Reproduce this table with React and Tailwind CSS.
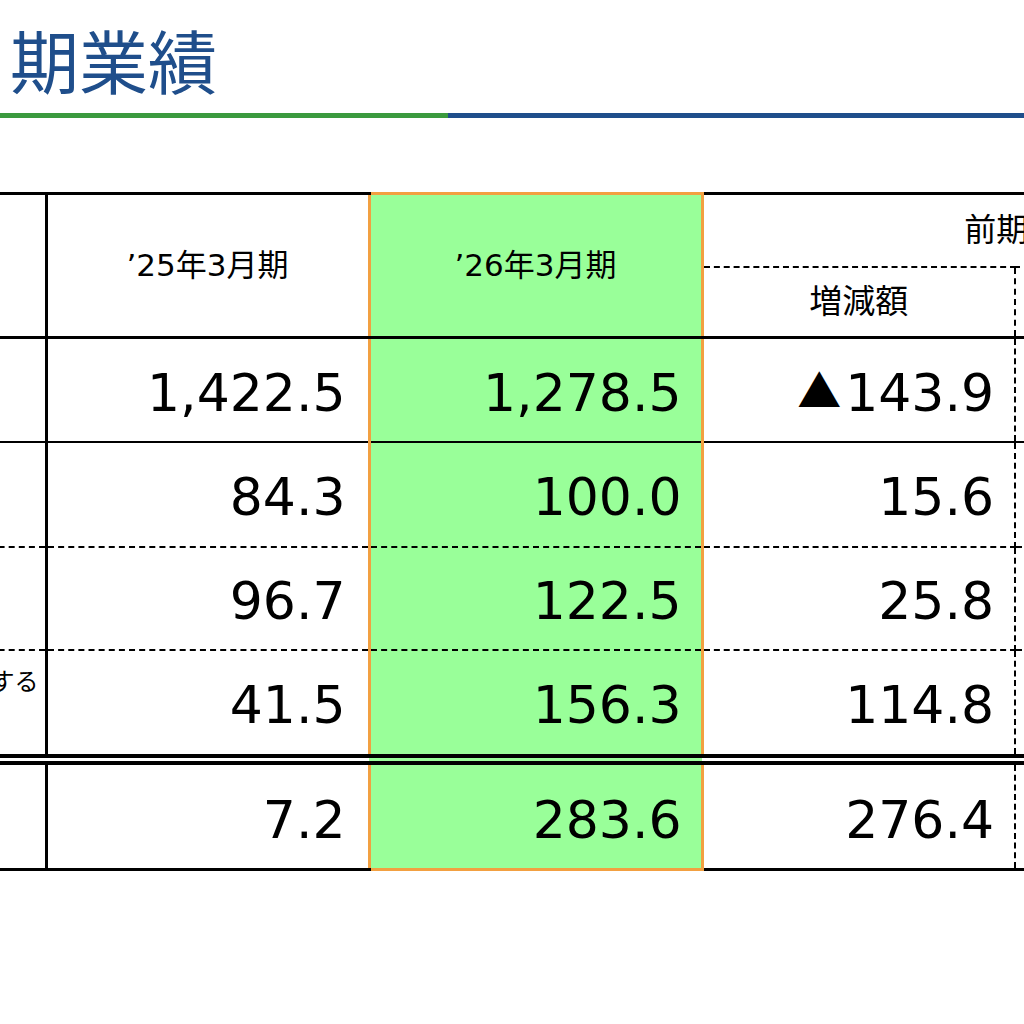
import React from 'react';

const rows = [
  { values: ['1,422.5', '1,278.5', '▲143.9'], line: 'solid', h: 'h-[104px]' },
  { values: ['84.3', '100.0', '15.6'], line: 'dashed', h: 'h-[105px]' },
  { values: ['96.7', '122.5', '25.8'], line: 'dashed', h: 'h-[103px]' },
  { values: ['41.5', '156.3', '114.8'], line: 'double', h: 'h-[110px]', label: 'する' },
  { values: ['7.2', '283.6', '276.4'], line: 'last', h: 'h-[110px]' },
];

// bottom line of each row, written out in full so Tailwind picks them up
const bottomLine = {
  solid: 'border-b-2 border-b-black',
  dashed: '[border-bottom:2px_dashed_#000]',
  double: '[border-bottom:11px_double_#000]',
  last: 'border-b-[3px] border-b-black',
};

const Num = ({ value }) => {
  if (value.startsWith('▲')) {
    return (
      <span>
        <span className="text-[44px] mr-[4px] align-[3px] font-['Noto_Sans_CJK_JP',sans-serif]">▲</span>
        {value.slice(1)}
      </span>
    );
  }
  return <span>{value}</span>;
};

const App = () => {
  return (
    <div className="w-[1024px] h-[1024px] bg-white overflow-hidden font-['DejaVu_Sans','Noto_Sans_CJK_JP',sans-serif] text-black">
      {/* タイトル */}
      <div className="pt-[25px] pl-[10px] text-[69px] leading-none text-[#1f4e8b] font-['Noto_Sans_CJK_JP',sans-serif]">
        期業績
      </div>
      <div className="mt-[19px] h-[5px] flex">
        <div className="w-[448px] bg-[#3b9a3e]" />
        <div className="flex-1 bg-[#1f4e8b]" />
      </div>

      {/* 業績表 */}
      <table className="mt-[74px] ml-[-254px] table-fixed border-collapse w-[1575px]">
        <colgroup>
          <col className="w-[300px]" />
          <col className="w-[323px]" />
          <col className="w-[333px]" />
          <col className="w-[313px]" />
          <col className="w-[306px]" />
        </colgroup>
        <thead>
          <tr className="h-[73px]">
            <th rowSpan={2} className="border-t-[3px] border-t-black border-r-[3px] border-r-black border-b-[3px] border-b-black" />
            <th rowSpan={2} className="border-t-[3px] border-t-black border-b-[3px] border-b-black text-[31px] font-normal">
              ’25年3月期
            </th>
            <th rowSpan={2} className="bg-[#99ff99] border-t-[3px] border-t-[#f2a041] border-x-[3px] border-x-[#f2a041] border-b-[3px] border-b-black text-[31px] font-normal">
              ’26年3月期
            </th>
            <th colSpan={2} className="border-t-[3px] border-t-black [border-bottom:2px_dashed_#000] text-[32px] font-normal">
              前期比
            </th>
          </tr>
          <tr className="h-[71px]">
            <th className="[border-right:2px_dashed_#000] border-b-[3px] border-b-black text-[33px] font-normal">
              増減額
            </th>
            <th className="border-b-[3px] border-b-black text-[33px] font-normal">
              増減率
            </th>
          </tr>
        </thead>
        <tbody>
          {rows.map((row, i) => (
            <tr key={i} className={row.h}>
              <td className={`border-r-[3px] border-r-black text-right pr-[6px] pb-[40px] text-[24px] ${bottomLine[row.line]}`}>
                {row.label}
              </td>
              <td className={`text-right pr-[22px] pt-[6px] text-[52px] leading-none ${bottomLine[row.line]}`}>
                <Num value={row.values[0]} />
              </td>
              <td
                className={`bg-[#99ff99] border-x-[3px] border-x-[#f2a041] text-right pr-[19px] pt-[6px] text-[52px] leading-none ${
                  row.line === 'last' ? 'border-b-[3px] border-b-[#f2a041]' : bottomLine[row.line]
                }`}
              >
                <Num value={row.values[1]} />
              </td>
              <td className={`[border-right:2px_dashed_#000] text-right pr-[20px] pt-[6px] text-[52px] leading-none ${bottomLine[row.line]}`}>
                <Num value={row.values[2]} />
              </td>
              <td className={bottomLine[row.line]} />
            </tr>
          ))}
        </tbody>
      </table>
    </div>
  );
};

export default App;
